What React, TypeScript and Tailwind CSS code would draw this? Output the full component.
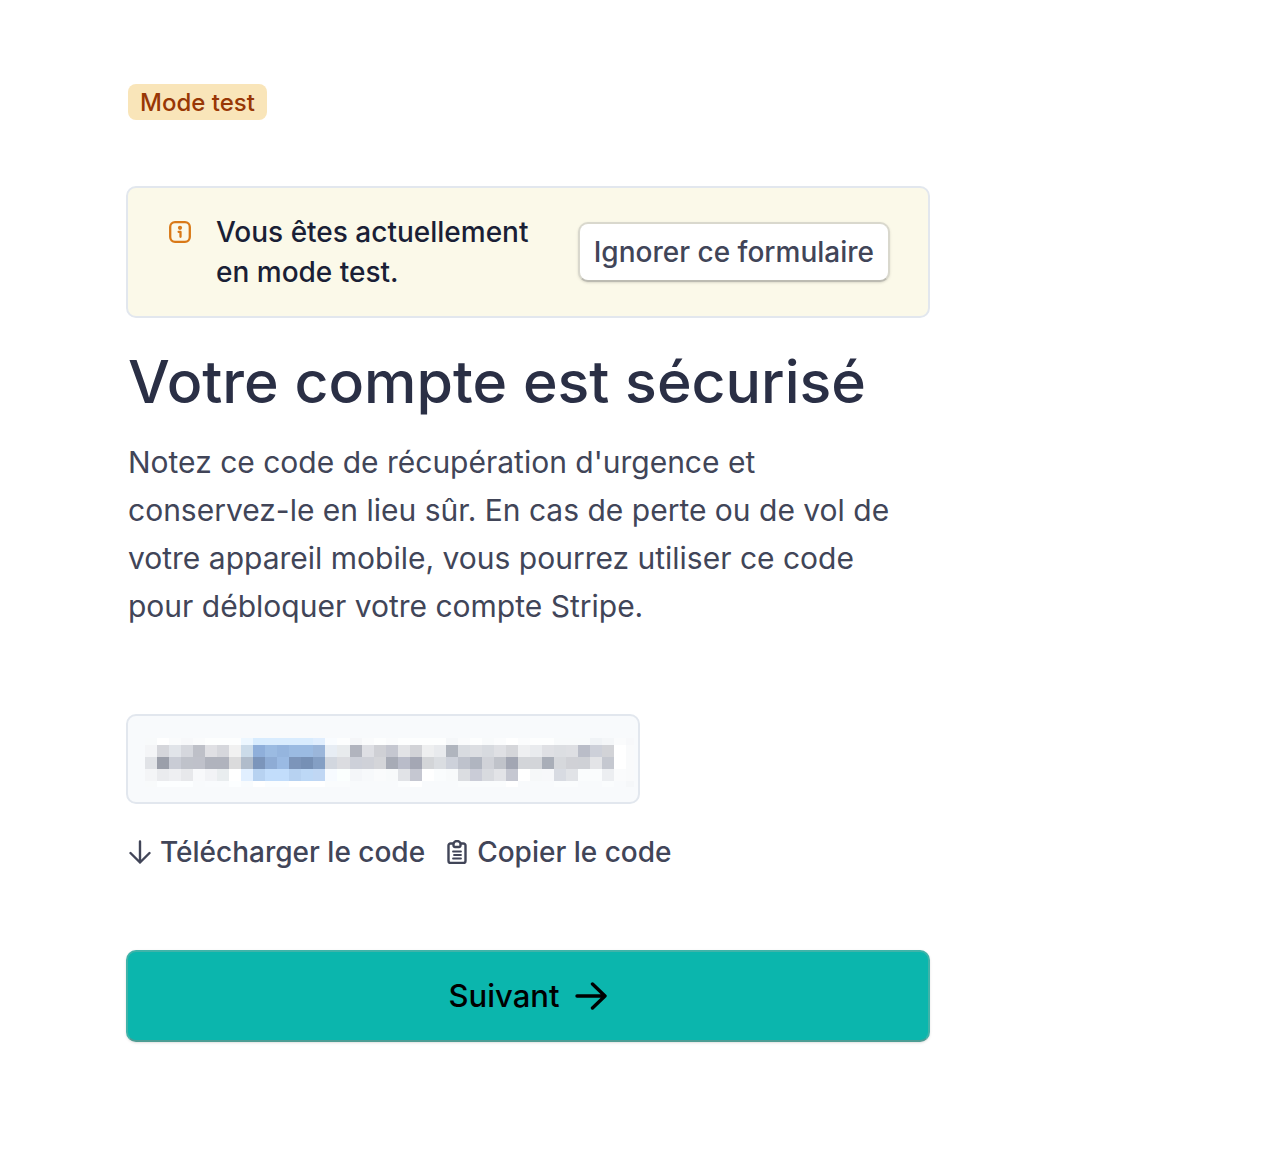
// Blurred recovery code, one row of blocks per entry
const blurRows = [
  {
    y: 0,
    height: 7,
    cells:
      'f8fafb ffffff fafbfc f7f8fa fafbfc fdfefe fdfefe fdfefe edf7ff d8ecfe d9ecfe d9ecfe d9ecfe d9ecfe e0eefe f9fcff fdfefe f5f6f8 fafbfc fdfefe fafbfc fdfefe fdfefe fdfefe fdfefe f5f7f9 fafbfc fdfefe f8fafb fbfcfd ffffff fbfcfd fdfefe fdfefe f8fafb f8fafb f8fafb f0f3f6 f4f6f8 fafbfc f7f8fa',
  },
  {
    y: 7,
    height: 12,
    cells:
      'f4f5f7 d5d6db e1e4e9 d5d7dd bec0c8 e0e0e4 d6d7dc f1f1f1 cbdbe9 8fafda 9bbbe2 95b5de 9bbbe2 9bbbe2 9bb6da e7edf4 e8ebed b1b4be dedfe4 cfd0d5 c5c7d0 e2e3e6 d2d3d7 eeeff0 e8eaed b0b5be d8dbe0 dcdee2 d7dadf dfe0e4 d5d6da eeeff1 e9ebee dfe0e4 dcdee2 dedfe3 babdc8 cdd0d9 d2d3d7 ffffff f9fafb',
  },
  {
    y: 19,
    height: 12,
    cells:
      'e1e3e7 9b9faa c9ccd5 bfc2ca bfc1ca b0b3bd b0b3bd dbdbdc b0bccb 7b95bb 8eacd5 9abae3 7c95ba 7690b5 849fc4 d2d7df dbdce0 cdd0d9 cfd1d8 d4d5d9 a7abb6 b9bcc9 a4a7b4 d3d5d8 dadde1 cdd1da bec2cc b0b5c0 d0d2d8 c0c3ca a2a6b3 d3d5d9 d3d5d9 a9aeb8 d6d8dc d0d1d6 cfd1d6 e3e4e7 c5c8d0 ffffff f9fafb',
  },
  {
    y: 31,
    height: 12,
    cells:
      'f4f5f7 eaebee eeeff2 e7e8eb f8f9fb f2f3f6 e9edef ffffff e1efff b7d2f1 c2ddfb c2ddfb b7d2f1 bdd8f6 c0d7f4 f7fbff fbfffe f4f6f9 f7f9fb fafbfc f8fafb e1e3e7 c5c7d1 ffffff fafcfd f8fafb dbdde1 caccd7 d8dadf e2e3e7 c5c7d1 ffffff f6f8f9 f7f8fa d8dbe2 e1e3e7 fafcfd fafcfd eceef1 fafbfc f9fafb',
  },
  {
    y: 43,
    height: 6,
    cells:
      'f8fafb fcfeff fcfeff fcfeff f8fafc f9fbfd f9fbfd fcfeff f8fbfd ffffff fafdff fafdff ffffff ffffff ffffff fafcfd fafcfd f8fafc f8fafc f8fafc f8fafc fbfdfe ffffff f8fafc f8fafc f8fafc fafcfd fafcfd fafcfd fafcfd ffffff f8fafc f8fafc f8fafc fafcfd fafcfd f8fafc f8fafc fafcfd f8fafc f5f7f9',
  },
];

function BlurredCode() {
  return (
    <svg
      className="h-[49px] w-[490px] max-w-full"
      viewBox="0 0 490 49"
      shapeRendering="crispEdges"
      role="img"
      aria-label="Code masqué"
    >
      {blurRows.map((row) =>
        row.cells.split(' ').map((color, i) => (
          <rect
            key={`${row.y}-${i}`}
            x={i * 12.03}
            y={row.y}
            width={i === 40 ? 8 : 12.03}
            height={row.height}
            fill={`#${color}`}
          />
        ))
      )}
    </svg>
  );
}

function InfoIcon() {
  return (
    <svg className="size-6 shrink-0 text-[#d97917]" viewBox="0 0 24 24" fill="none" stroke="currentColor">
      <rect x="2.2" y="2.2" width="19.6" height="19.6" rx="4.8" strokeWidth={2.3} />
      <circle cx="12" cy="7.8" r="2.1" fill="currentColor" stroke="none" />
      <path d="M10.6 11.8h1.9v5" strokeWidth={2.3} strokeLinecap="round" strokeLinejoin="round" />
    </svg>
  );
}

function DownloadIcon() {
  return (
    <svg
      className="size-6 shrink-0"
      viewBox="0 0 24 24"
      fill="none"
      stroke="currentColor"
      strokeWidth={2.4}
      strokeLinecap="round"
      strokeLinejoin="round"
    >
      <path d="M12 1.5v21M2.5 13l9.500 9.500 9.500-9.500" />
    </svg>
  );
}

function ClipboardIcon() {
  return (
    <svg
      className="size-6 shrink-0"
      viewBox="0 0 24 24"
      fill="none"
      stroke="currentColor"
      strokeWidth={2.4}
      strokeLinecap="round"
      strokeLinejoin="round"
    >
      <path d="M8 3.500H5.500a2 2 0 0 0-2 2V21a2 2 0 0 0 2 2h13a2 2 0 0 0 2-2V5.500a2 2 0 0 0-2-2H16" />
      <path d="M8.500 4a3.500 3 0 0 1 7 0v1.500a1.500 1.500 0 0 1-1.500 1.500h-4a1.500 1.500 0 0 1-1.500-1.500z" />
      <path d="M8 11.500h8M9 15h7M8 18.500h8" strokeWidth={1.8} />
    </svg>
  );
}

function NextIcon() {
  return (
    <svg
      className="size-8 shrink-0"
      viewBox="0 0 32 32"
      fill="none"
      stroke="currentColor"
      strokeWidth={3.4}
      strokeLinecap="round"
      strokeLinejoin="round"
    >
      <path d="M2 16h28M17.500 4L30 16 17.500 28" />
    </svg>
  );
}

export default function App() {
  return (
    <main className="min-h-screen bg-white px-[126px] pt-[84px] pb-28 font-['Inter',sans-serif] text-[#414558]">
      <div className="max-w-[804px]">
        <span className="ml-0.5 inline-flex h-9 items-center rounded-lg bg-[#f9e5b9] px-3 pt-0.5 text-[24px] font-medium text-[#983705]">
          Mode test
        </span>

        <div className="mt-[66px] flex items-center rounded-[10px] border-2 border-[#e2e7ee] bg-[#fbf9e9] px-[38px] py-6">
          <div className="flex flex-1 gap-6 pl-0.5">
            <div className="pt-2">
              <InfoIcon />
            </div>
            <p className="max-w-[330px] text-[28px] leading-10 font-medium text-[#1a1f36]">
              Vous êtes actuellement en mode test.
            </p>
          </div>
          <button
            type="button"
            className="h-[60px] shrink-0 rounded-[10px] border-2 border-[#d9d8cd] border-b-[#bcbbb2] bg-white px-3.5 text-[28px] font-medium whitespace-nowrap shadow-sm"
          >
            Ignorer ce formulaire
          </button>
        </div>

        <h1 className="mt-8 ml-0.5 text-[59px] leading-[64px] font-medium text-[#2a2f45]">
          Votre compte est sécurisé
        </h1>
        <p className="mt-6 ml-0.5 max-w-[780px] text-[30px] leading-[48px]">
          Notez ce code de récupération d'urgence et conservez-le en lieu sûr. En cas de perte ou de vol de
          votre appareil mobile, vous pourrez utiliser ce code pour débloquer votre compte Stripe.
        </p>

        <div className="mt-[84px] flex h-[90px] w-fit items-start rounded-[10px] border-2 border-[#e2e7ee] bg-[#f8fafc] pt-[22px] pr-[3px] pl-[17px]">
          <BlurredCode />
        </div>

        <div className="mt-7 ml-0.5 flex flex-wrap gap-5 text-[28px] leading-10 font-medium">
          <button type="button" className="flex items-center gap-2">
            <DownloadIcon />
            Télécharger le code
          </button>
          <button type="button" className="flex items-center gap-2">
            <ClipboardIcon />
            Copier le code
          </button>
        </div>

        <button
          type="button"
          className="mt-[78px] flex h-[92px] w-full items-center justify-center gap-4 rounded-[10px] border-2 border-[#40b3a9] border-b-[#4c9d94] bg-[#0bb6ad] text-[31px] font-medium text-black shadow-sm"
        >
          Suivant
          <NextIcon />
        </button>
      </div>
    </main>
  );
}
